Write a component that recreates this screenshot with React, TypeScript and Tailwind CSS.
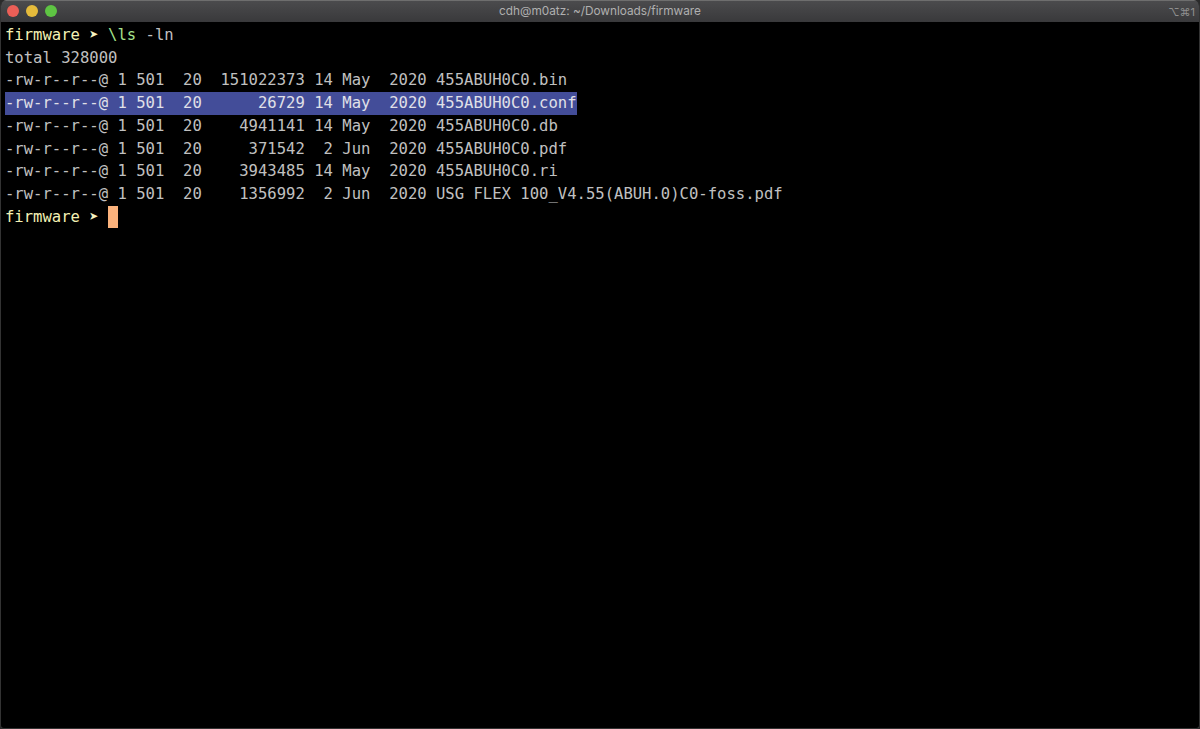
const rows = [
  "-rw-r--r--@ 1 501  20  151022373 14 May  2020 455ABUH0C0.bin",
  "-rw-r--r--@ 1 501  20      26729 14 May  2020 455ABUH0C0.conf",
  "-rw-r--r--@ 1 501  20    4941141 14 May  2020 455ABUH0C0.db",
  "-rw-r--r--@ 1 501  20     371542  2 Jun  2020 455ABUH0C0.pdf",
  "-rw-r--r--@ 1 501  20    3943485 14 May  2020 455ABUH0C0.ri",
  "-rw-r--r--@ 1 501  20    1356992  2 Jun  2020 USG FLEX 100_V4.55(ABUH.0)C0-foss.pdf",
];

function Prompt() {
  return (
    <>
      <span className="text-[#f3f0b4]">firmware </span>
      <span className="text-[#f6f3c0]">➤ </span>
    </>
  );
}

export default function App() {
  return (
    <div className="h-[729px] w-[1200px] overflow-hidden bg-[#2a2a2a]">
      <div className="flex h-full flex-col overflow-hidden rounded-t-[6px] rounded-b-[4px] border border-t-0 border-[#333333] bg-black">
        <div className="relative flex h-[22px] shrink-0 items-center justify-center border-t border-[#6e6e6e] bg-gradient-to-b from-[#4b4b4d] to-[#39393b] font-['Inter','Liberation_Sans',sans-serif] text-[11.8px] text-[#b0b0b0]">
          <div className="absolute left-[6px] top-[4px] flex gap-[7px]">
            <span className="size-[12px] rounded-full bg-[#ec5f57]" />
            <span className="size-[12px] rounded-full bg-[#e5bb3b]" />
            <span className="size-[12px] rounded-full bg-[#5ec443]" />
          </div>
          <span>cdh@m0atz: ~/Downloads/firmware</span>
          <span className="absolute right-[4px] top-[3px] text-[11px] text-[#8f8f8f]">⌥⌘1</span>
        </div>
        <div className="flex-1 whitespace-pre pl-[4px] pt-[2px] font-['DejaVu_Sans_Mono',monospace] text-[15.57px] leading-[22.7px] text-[#c0c0c0]">
          <div>
            <Prompt />
            <span className="text-[#a6e38c]">\ls</span>
            <span className="text-[#c0c0c0]"> -ln</span>
          </div>
          <div>total 328000</div>
          {rows.map((row, i) => (
            <div key={row}>
              {i === 1 ? <span className="inline-block bg-[#434d99] text-[#e0e0e8]">{row}</span> : row}
            </div>
          ))}
          <div className="flex items-center">
            <span>
              <Prompt />
            </span>
            <span className="h-[22px] w-[10px] bg-[#fbb27c]" />
          </div>
        </div>
      </div>
    </div>
  );
}
